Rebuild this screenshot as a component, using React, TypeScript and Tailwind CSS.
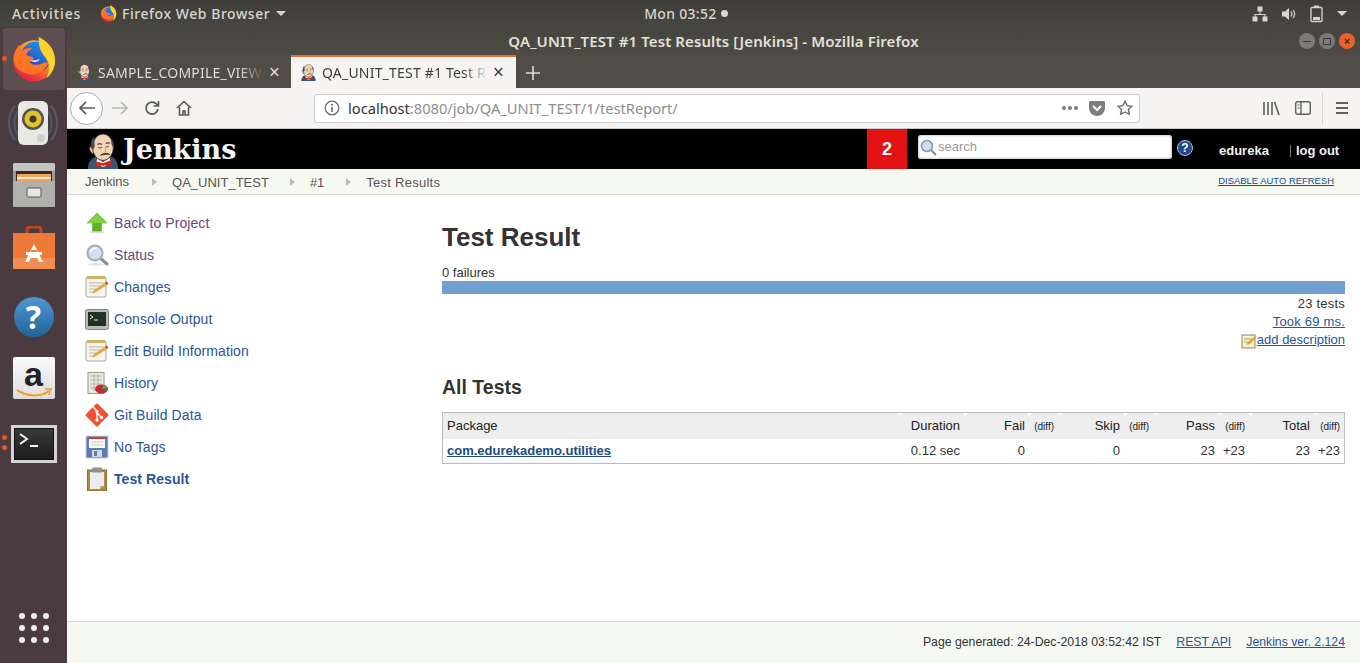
import type { ReactNode } from "react";

const sideItems = [
  { label: "Back to Project", icon: "up", visited: true },
  { label: "Status", icon: "search", visited: true },
  { label: "Changes", icon: "notepad" },
  { label: "Console Output", icon: "terminal" },
  { label: "Edit Build Information", icon: "notepad" },
  { label: "History", icon: "history" },
  { label: "Git Build Data", icon: "git" },
  { label: "No Tags", icon: "save" },
  { label: "Test Result", icon: "clipboard", bold: true },
];

// little white notches on the header row, one per column edge
const notches = [
  "left-[455px]",
  "left-[521px]",
  "left-[585px]",
  "left-[616px]",
  "left-[681px]",
  "left-[711px]",
  "left-[776px]",
  "left-[806px]",
  "left-[871px]",
];

function FirefoxLogo({ size }: { size: number }) {
  return (
    <svg width={size} height={size} viewBox="0 0 48 48">
      <defs>
        <linearGradient id="ffo" x1="0.8" y1="0.1" x2="0.3" y2="1">
          <stop offset="0" stopColor="#ffb52e" />
          <stop offset="0.5" stopColor="#ff7a1f" />
          <stop offset="1" stopColor="#e3164f" />
        </linearGradient>
        <linearGradient id="ffb" x1="0.8" y1="0" x2="0.2" y2="1">
          <stop offset="0" stopColor="#1a9af0" />
          <stop offset="1" stopColor="#3a2fb8" />
        </linearGradient>
      </defs>
      <circle cx="24" cy="26" r="21.500" fill="url(#ffo)" />
      <circle cx="26" cy="22" r="16" fill="url(#ffb)" />
      <path d="M29 1c9 4 17 13 17 24 0 9-4 15-9 19 4-8 3-15 0-20-3-5-9-9-8-23z" fill="#ffd22e" />
      <path d="M3 25c-1-6 2-12 6-16 0 3 0 5 2 7 3-3 7-4 11-3-2 2-5 3-6 6 0 2 4 2 7 3 1 2-1 4-4 5 3 3 8 4 13 2 3-2 5-2 7-1-3 8-11 13-19 12C11 39 4 33 3 25z" fill="#ff7425" />
      <path d="M20 25c3 1 7 0 10-1-1 3-6 5-10 1z" fill="#fff" opacity="0.85" />
    </svg>
  );
}

function Butler({ size }: { size: number }) {
  return (
    <svg width={size} height={size} viewBox="0 0 36 38">
      <path d="M2 38c0-7 3-11 8-13 5-1 15-1 19 1 3 2 5 6 5 12z" fill="#3a5468" />
      <path d="M12 26l6 5 7-5 1 5-7 5h-2l-6-5z" fill="#efefef" />
      <path d="M11 30l7 2 8-3 1 6-8-1-1 2-1-2-7 2z" fill="#d8231f" />
      <path d="M6 14c-2 0-3 2-2 4 1 2 2 4 4 4l1-8z" fill="#e8bd98" stroke="#2a2320" strokeWidth="0.700" />
      <ellipse cx="18" cy="15" rx="11" ry="14" fill="#f1d3b5" stroke="#2a2320" strokeWidth="0.800" />
      <path d="M5 15C5 8 7 5 9 4c-1 4 1 7 0 11l-2 3zM26 5c3 3 4 6 3 11l-2-4z" fill="#4b4b4a" />
      <path d="M12 12c2-1 3-1 5 0M21 11c2-1 3-1 4 0" stroke="#2a2320" strokeWidth="1.100" fill="none" />
      <path d="M13 15c1 1 3 1 4 0M21 14c1 1 2 1 3 0" stroke="#2a2320" strokeWidth="0.900" fill="none" />
      <path d="M20 15c1 3 1 4 0 6" stroke="#b98d70" strokeWidth="0.800" fill="none" />
      <path d="M14 24c3-3 6-3 8-3 2 0 3 1 4 2-3 0-8 0-12 1z" fill="#3c2f28" />
    </svg>
  );
}

function SideIcon({ type }: { type: string }) {
  if (type === "up") {
    return (
      <svg width="24" height="24" viewBox="0 0 24 24">
        <ellipse cx="12" cy="21" rx="8" ry="1.500" fill="#ddd" />
        <path d="M12 2l10 10h-5.500v8h-9v-8H2z" fill="#5fb32a" stroke="#4c9a1f" strokeWidth="0.500" />
        <path d="M12 2l10 10H2z" fill="#86cf45" />
      </svg>
    );
  }
  if (type === "search") {
    return (
      <svg width="24" height="24" viewBox="0 0 24 24">
        <ellipse cx="11" cy="21.500" rx="9" ry="1.500" fill="#e6e6e6" />
        <path d="M15 15l7 6" stroke="#8a8f94" strokeWidth="3" strokeLinecap="round" />
        <circle cx="10" cy="10" r="7.500" fill="#cfe0f2" stroke="#a3adb7" strokeWidth="2" />
        <path d="M5.500 9c1-3 3-4 6-4" stroke="#fff" strokeWidth="1.500" fill="none" />
      </svg>
    );
  }
  if (type === "notepad") {
    return (
      <svg width="24" height="24" viewBox="0 0 24 24">
        <rect x="1" y="2" width="20" height="20" rx="1" fill="#f6f4ec" stroke="#a8a8a0" />
        <rect x="2" y="1" width="18" height="3" fill="#c9b458" />
        <path d="M4 8h15M4 11h12M4 14h8M4 17h6" stroke="#b9b9b0" strokeWidth="1" />
        <path d="M7 19l2-4 11-7 2 2-11 7z" fill="#e3a73c" />
        <path d="M20 8l2 2 1.500-1.500-2-2z" fill="#d8392b" />
      </svg>
    );
  }
  if (type === "terminal") {
    return (
      <svg width="24" height="24" viewBox="0 0 24 24">
        <rect x="0.500" y="2.500" width="23" height="20" rx="2" fill="#b9bbb6" stroke="#80827e" />
        <rect x="3" y="5" width="18" height="14" fill="#1f3322" />
        <path d="M5 8l3 2-3 2" stroke="#e5efe5" strokeWidth="1" fill="none" />
        <path d="M9 13h4" stroke="#e5efe5" strokeWidth="1" />
      </svg>
    );
  }
  if (type === "history") {
    return (
      <svg width="24" height="24" viewBox="0 0 24 24">
        <rect x="3" y="1.500" width="16" height="21" fill="#e9e9e4" stroke="#9a9a94" />
        <path d="M5 5h12M5 9h12M5 13h12M5 17h8M9 3v17M13 3v14" stroke="#b5b5ae" strokeWidth="1" />
        <ellipse cx="16.500" cy="18" rx="6.500" ry="4.500" fill="#c9252f" />
        <path d="M16.500 18l2-4c2 .5 3.500 1.800 4 3.500z" fill="#6a9f3c" />
        <path d="M16.500 18l6 0c0 1-.5 2-1.500 2.500z" fill="#3b6aa8" />
      </svg>
    );
  }
  if (type === "git") {
    return (
      <svg width="24" height="24" viewBox="0 0 24 24">
        <rect x="3.500" y="3.500" width="17" height="17" rx="1.500" transform="rotate(45 12 12)" fill="#f05133" />
        <path d="M8 4l4 4v9M12 10l5 5" stroke="#fff" strokeWidth="1.300" fill="none" />
        <circle cx="12" cy="8.500" r="1.700" fill="#fff" />
        <circle cx="12" cy="17" r="1.700" fill="#fff" />
        <circle cx="16.500" cy="14.500" r="1.700" fill="#fff" />
      </svg>
    );
  }
  if (type === "save") {
    return (
      <svg width="24" height="24" viewBox="0 0 24 24">
        <rect x="1" y="1" width="22" height="22" rx="1" fill="#5b7bb3" stroke="#c8cdd8" />
        <rect x="4" y="2" width="16" height="11" fill="#fafafa" />
        <rect x="4" y="2" width="16" height="2" fill="#d8392b" />
        <path d="M6 7h12M6 10h12" stroke="#ccc" strokeWidth="1" />
        <rect x="7" y="15" width="10" height="7" fill="#d2d6dc" />
        <rect x="9" y="16" width="3" height="5" fill="#5b7bb3" />
      </svg>
    );
  }
  return (
    <svg width="24" height="24" viewBox="0 0 24 24">
      <rect x="2.500" y="3" width="19" height="21" fill="#b5853f" stroke="#96702f" />
      <path d="M5 5h14v14l-4 3H5z" fill="#ececec" />
      <path d="M15 22l4-3h-4z" fill="#a9a9a9" />
      <rect x="7" y="0.500" width="10" height="5" rx="1" fill="#8f8f8f" />
    </svg>
  );
}

function TableHead({ children, right }: { children: ReactNode; right?: boolean }) {
  return <div className={`text-[13px] text-[#222] ${right ? "text-right" : ""}`}>{children}</div>;
}

function Diff() {
  return <div className="text-right text-[10px] text-[#222] pt-px">(diff)</div>;
}

function Crumb({ label }: { label: string }) {
  return <span className="text-[13px] text-[#555]">{label}</span>;
}

function CrumbArrow() {
  return <span className="block w-0 h-0 border-y-[4px] border-y-transparent border-l-[5px] border-l-[#bbb]" />;
}

export default function App() {
  return (
    <div className="w-[1360px] h-[663px] overflow-hidden flex flex-col bg-white font-['Liberation_Sans',sans-serif]">
      {/* gnome top bar */}
      <div className="h-[27px] shrink-0 bg-gradient-to-b from-[#3e3d39] to-[#47463f] flex items-center pl-3 pr-[13px] text-[#d8d6d0] font-['Noto_Sans',sans-serif] text-[14px] font-medium tracking-[0.55px]">
        <span className="w-[68px] tracking-[0.9px]">Activities</span>
        <span className="ml-[20px]"><FirefoxLogo size={17} /></span>
        <span className="ml-[5px]">Firefox Web Browser</span>
        <span className="ml-[6px] w-0 h-0 border-x-[5px] border-x-transparent border-t-[5px] border-t-[#d8d6d0]" />
        <span className="ml-[358px] tracking-[0.3px]">Mon 03:52</span>
        <span className="ml-[4px] w-[7px] h-[7px] rounded-full bg-[#d8d6d0]" />
        <div className="ml-auto flex items-center gap-[13px]">
          <svg width="16" height="16" viewBox="0 0 16 16" fill="#d8d6d0">
            <rect x="5.500" y="0.500" width="5" height="5" />
            <rect x="0.500" y="10.500" width="5" height="5" />
            <rect x="10.500" y="10.500" width="5" height="5" />
            <path d="M7.500 5h1v3h5v3h-1V9H3.500v2h-1V8h5z" />
          </svg>
          <svg width="16" height="16" viewBox="0 0 16 16" fill="none">
            <path d="M1 5.500h3L8 2v12l-4-3.500H1z" fill="#d8d6d0" />
            <path d="M10 5.500c1 1.500 1 3.500 0 5M12 4c2 2.500 2 5.500 0 8" stroke="#d8d6d0" strokeWidth="1.200" />
          </svg>
          <svg width="14" height="18" viewBox="0 0 14 18" fill="none">
            <rect x="1" y="2.500" width="11" height="14" rx="1" stroke="#d8d6d0" strokeWidth="1.300" />
            <rect x="4" y="0.500" width="5" height="2" fill="#d8d6d0" />
            <rect x="3" y="12" width="7" height="3" fill="#d8d6d0" />
          </svg>
          <span className="w-0 h-0 border-x-[5px] border-x-transparent border-t-[5px] border-t-[#d8d6d0]" />
        </div>
      </div>

      <div className="flex-1 flex min-h-0">
        {/* launcher */}
        <aside className="w-[67px] shrink-0 bg-[#4a3b40] flex flex-col items-center relative">
          <span className="absolute left-[2px] top-[29px] w-[5px] h-[5px] rounded-full bg-[#e9561f]" />
          <div className="mt-px w-[62px] h-[62px] ml-px rounded-[4px] bg-[#5e4e52] flex items-center justify-center">
            <FirefoxLogo size={46} />
          </div>
          <div className="mt-[8px] h-[50px] flex items-center justify-center -ml-px">
            <svg width="50" height="50" viewBox="0 0 50 50" fill="none">
              <path d="M7 8C-1 17-1 33 7 42M43 8c8 9 8 25 0 34" stroke="#5a7086" strokeWidth="2" opacity="0.6" />
              <path d="M11 12C5 19 5 31 11 38M39 12c6 7 6 19 0 26" stroke="#5a7086" strokeWidth="2" opacity="0.5" />
              <rect x="10" y="3" width="30" height="44" rx="6" fill="#e8e8e4" />
              <circle cx="25" cy="21" r="11" fill="#55554e" />
              <circle cx="25" cy="21" r="8.500" fill="#e1c42c" />
              <circle cx="25" cy="21" r="3.500" fill="#3a3a30" />
              <circle cx="33" cy="40" r="4" fill="#cfcfca" />
            </svg>
          </div>
          <div className="mt-[15px] h-[44px] w-[42px]">
            <svg width="42" height="44" viewBox="0 0 42 44">
              <rect x="0" y="0" width="42" height="44" rx="2" fill="#9b9b98" />
              <rect x="0" y="0" width="42" height="8" rx="2" fill="#c4c4c1" />
              <rect x="3" y="8" width="36" height="10" fill="#2e2a28" />
              <rect x="4" y="11" width="34" height="7" fill="#f3a657" />
              <rect x="4" y="14" width="34" height="2" fill="#f8e6cf" />
              <rect x="0" y="18" width="42" height="26" fill="#b0b0ad" />
              <rect x="14" y="25" width="14" height="9" rx="1" fill="#e6e6e3" stroke="#555" />
            </svg>
          </div>
          <div className="mt-[19px] h-[44px] w-[42px]">
            <svg width="42" height="44" viewBox="0 0 42 44">
              <path d="M14 8V4c0-2 1-3 3-3h8c2 0 3 1 3 3v4" stroke="#b84a1e" strokeWidth="3" fill="none" />
              <rect x="0" y="7" width="42" height="36" fill="#ee7a38" />
              <rect x="0" y="32" width="42" height="11" fill="#f18d52" />
              <path d="M21 18l-9 18h4l1.500-4h7l1.500 4h4z" fill="#fff" />
              <rect x="13" y="26" width="16" height="3" fill="#fff" />
              <rect x="18" y="24" width="6" height="2" fill="#ee7a38" />
            </svg>
          </div>
          <div className="mt-[27px] w-[40px] h-[40px] rounded-full bg-gradient-to-b from-[#5098d2] to-[#1f639b] flex items-center justify-center text-white text-[32px] font-bold font-['Noto_Sans',sans-serif] leading-none">?</div>
          <div className="mt-[20px] w-[42px] h-[42px] rounded-[2px] bg-gradient-to-b from-[#fbfbfb] to-[#dcdcdc] flex flex-col items-center justify-center relative">
            <span className="text-[#222] text-[34px] leading-[30px] font-bold font-['Liberation_Sans',sans-serif]">a</span>
            <svg width="36" height="10" viewBox="0 0 36 10" className="-mt-px">
              <path d="M1 2c10 7 24 7 32 1" stroke="#f39a1e" strokeWidth="2" fill="none" />
              <path d="M29 1l6 0-2 6" stroke="#f39a1e" strokeWidth="1.500" fill="none" />
            </svg>
          </div>
          <span className="absolute left-[2px] top-[408px] w-[5px] h-[5px] rounded-full bg-[#e9561f]" />
          <span className="absolute left-[2px] top-[418px] w-[5px] h-[5px] rounded-full bg-[#e9561f]" />
          <div className="mt-[26px] w-[46px] h-[38px] border-[3px] border-[#d4d4d0] bg-gradient-to-b from-[#3a3a3a] to-[#1c1c1c] shadow-[inset_0_0_0_1px_#111] relative">
            <svg width="30" height="24" viewBox="0 0 30 24" className="absolute left-[3px] top-[2px]">
              <path d="M3 4l7 5-7 5" stroke="#f2f2f2" strokeWidth="2" fill="none" />
              <path d="M13 16h8" stroke="#f2f2f2" strokeWidth="2" />
            </svg>
          </div>
          <div className="mt-auto mb-[20px] grid grid-cols-3 gap-x-[6px] gap-y-[6px]">
            {Array.from({ length: 9 }).map((_, i) => (
              <span key={i} className="w-[6px] h-[6px] rounded-full bg-[#f0eeee]" />
            ))}
          </div>
        </aside>

        <div className="flex-1 flex flex-col min-w-0">
          {/* firefox chrome */}
          <div className="h-[28px] shrink-0 bg-gradient-to-b from-[#45443e] to-[#4d4b44] flex items-center relative">
            <span className="w-full text-center text-[15px] font-['Noto_Sans',sans-serif] font-semibold tracking-[0.1px] text-[#e2e0da]">QA_UNIT_TEST #1 Test Results [Jenkins] - Mozilla Firefox</span>
            <div className="absolute right-[5px] top-[6px] flex gap-[4px]">
              <span className="w-4 h-4 rounded-full bg-[#7b7a74] flex items-center justify-center"><span className="w-2 h-px bg-[#3c3b37]" /></span>
              <span className="w-4 h-4 rounded-full bg-[#7b7a74] flex items-center justify-center"><span className="w-2 h-[7px] border border-[#3c3b37]" /></span>
              <span className="w-4 h-4 rounded-full bg-[#e9622c] flex items-center justify-center text-[#3c2b20] text-[11px] font-bold leading-none">×</span>
            </div>
          </div>
          <div className="h-[33px] shrink-0 bg-[#4f4d46] flex items-end font-['Noto_Sans',sans-serif] text-[14px] tracking-[0.2px]">
            <div className="w-[224px] h-[31px] flex items-center pl-[9px] text-[#dedcd6]">
              <Butler size={17} />
              <span className="ml-[5px] w-[166px] overflow-hidden whitespace-nowrap [mask-image:linear-gradient(to_right,black_85%,transparent)]">SAMPLE_COMPILE_VIEW</span>
              <span className="ml-[5px] text-[19px] leading-none text-[#dedcd6]">×</span>
            </div>
            <div className="w-[225px] h-[33px] bg-[#f5f4f2] border-t-[2px] border-[#e96c3c] flex items-center pl-[9px] text-[#3d3d3a]">
              <Butler size={17} />
              <span className="ml-[5px] w-[166px] overflow-hidden whitespace-nowrap [mask-image:linear-gradient(to_right,black_85%,transparent)]">QA_UNIT_TEST #1 Test R</span>
              <span className="ml-[5px] text-[19px] leading-none">×</span>
            </div>
            <span className="ml-[10px] h-[31px] flex items-center text-[#dedcd6]">
              <svg width="14" height="14" viewBox="0 0 14 14"><path d="M7 0v14M0 7h14" stroke="#dedcd6" strokeWidth="1.600" /></svg>
            </span>
          </div>
          <div className="h-[41px] shrink-0 bg-[#f5f4f2] border-b border-[#c8c8c6] flex items-center pl-[3px] pr-[12px] relative">
            <div className="w-[33px] h-[33px] rounded-full border border-[#a9a9a8] bg-white flex items-center justify-center">
              <svg width="18" height="16" viewBox="0 0 18 16" fill="none"><path d="M17 8H2M8 2L2 8l6 6" stroke="#5a5a58" strokeWidth="1.700" /></svg>
            </div>
            <svg width="18" height="16" viewBox="0 0 18 16" fill="none" className="ml-[8px]"><path d="M1 8h15M10 2l6 6-6 6" stroke="#b4b4b2" strokeWidth="1.700" /></svg>
            <svg width="16" height="16" viewBox="0 0 16 16" fill="none" className="ml-[15px]"><path d="M14 9a6 6 0 1 1-1.700-5.200L14 5.500M14.500 1v5h-5" stroke="#5a5a58" strokeWidth="1.700" /></svg>
            <svg width="16" height="16" viewBox="0 0 16 16" fill="none" className="ml-[16px]"><path d="M1 8l7-6.500L15 8M3.500 7v8h3.500v-4h2v4h3.500V7" stroke="#5a5a58" strokeWidth="1.600" /></svg>
            <div className="ml-[122px] w-[826px] h-[29px] bg-white border border-[#ccc] rounded-[3px] flex items-center pl-[9px] pr-[6px] font-['Noto_Sans',sans-serif] text-[14.650px]">
              <svg width="16" height="16" viewBox="0 0 16 16" fill="none" className="shrink-0"><circle cx="8" cy="8" r="6.800" stroke="#6a6a68" strokeWidth="1.300" /><path d="M8 7v5" stroke="#6a6a68" strokeWidth="1.600" /><circle cx="8" cy="4.700" r="1" fill="#6a6a68" /></svg>
              <span className="ml-[8px] pt-px text-[#333]">localhost</span>
              <span className="pt-px text-[#8e8e8c]">:8080/job/QA_UNIT_TEST/1/testReport/</span>
              <span className="ml-auto flex gap-[2px] mr-[11px]">
                <span className="w-[4px] h-[4px] rounded-full bg-[#7d7d7b]" /><span className="w-[4px] h-[4px] rounded-full bg-[#7d7d7b]" /><span className="w-[4px] h-[4px] rounded-full bg-[#7d7d7b]" />
              </span>
              <svg width="16" height="15" viewBox="0 0 16 15" className="mr-[12px]"><path d="M1.500 0h13A1.500 1.500 0 0 1 16 1.500V7a8 8 0 0 1-16 0V1.500A1.500 1.500 0 0 1 1.500 0z" fill="#7d7d7b" /><path d="M4 5l4 4 4-4" stroke="#fff" strokeWidth="2" fill="none" /></svg>
              <svg width="16" height="16" viewBox="0 0 16 16" fill="none"><path d="M8 1.200l2.100 4.400 4.800.6-3.500 3.300.9 4.800L8 12l-4.300 2.300.9-4.800L1.100 6.200l4.800-.6z" stroke="#6a6a68" strokeWidth="1.400" /></svg>
            </div>
            <svg width="17" height="15" viewBox="0 0 17 15" fill="none" className="ml-[123px]"><path d="M1 1v13M5 1v13M9 1v13M11.500 1l4.500 13" stroke="#5f5f5d" strokeWidth="1.600" /></svg>
            <svg width="16" height="14" viewBox="0 0 16 14" fill="none" className="ml-[15px]"><rect x="0.700" y="0.700" width="14.600" height="12.600" rx="2" stroke="#5f5f5d" strokeWidth="1.400" /><path d="M6 1v12" stroke="#5f5f5d" strokeWidth="1.400" /><path d="M2.500 4h2M2.500 7h2" stroke="#5f5f5d" /></svg>
            <span className="ml-[11px] w-px h-[33px] bg-[#d6d6d4]" />
            <span className="ml-[13px] w-[12px] flex flex-col gap-[3.500px]">
              <span className="h-[1.500px] bg-[#5f5f5d]" /><span className="h-[1.500px] bg-[#5f5f5d]" /><span className="h-[1.500px] bg-[#5f5f5d]" />
            </span>
          </div>

          {/* jenkins header */}
          <header className="h-[40px] shrink-0 bg-black flex items-center">
            <div className="w-[800px] h-full flex items-center pl-[18px]">
              <div className="self-end"><Butler size={36} /></div>
              <span className="ml-[2px] font-['DejaVu_Serif',serif] font-bold text-[27px] text-[#f4f4f0] leading-none">Jenkins</span>
            </div>
            <div className="w-[40px] h-full bg-[#e31313] flex items-center justify-center text-white text-[18px] font-bold">2</div>
            <div className="ml-[11px] -mt-[4px] w-[254px] h-[24px] rounded-[3px] bg-white shadow-[inset_0_0_3px_#999] flex items-center pl-[2px]">
              <svg width="17" height="17" viewBox="0 0 17 17" fill="none"><path d="M11 11l5 5" stroke="#7d8a99" strokeWidth="2" /><circle cx="7" cy="7" r="5.500" fill="#cfe0f2" stroke="#7d9ab8" strokeWidth="1.500" /></svg>
              <span className="ml-px text-[13px] text-[#999]">search</span>
            </div>
            <div className="ml-[5px] -mt-[2px] w-[16px] h-[16px] rounded-full bg-[#204a87] border border-[#a9c0dd] flex items-center justify-center text-white text-[12px] font-bold leading-none">?</div>
            <span className="ml-[26px] mt-[3px] text-[13px] font-bold text-[#f0f0f0]">edureka</span>
            <span className="ml-[21px] mt-[3px] w-px h-[12px] bg-[#777]" />
            <span className="ml-[5px] mt-[3px] text-[13px] font-bold text-[#f0f0f0]">log out</span>
          </header>

          {/* breadcrumbs */}
          <div className="h-[26px] shrink-0 bg-[#f6f8f2] border-b border-[#d3d7cf] flex items-center pl-[18px] pr-[26px]">
            <Crumb label="Jenkins" />
            <span className="ml-[23px]"><CrumbArrow /></span>
            <span className="ml-[15px]"><Crumb label="QA_UNIT_TEST" /></span>
            <span className="ml-[21px]"><CrumbArrow /></span>
            <span className="ml-[15px]"><Crumb label="#1" /></span>
            <span className="ml-[22px]"><CrumbArrow /></span>
            <span className="ml-[15px] tracking-[0.25px]"><Crumb label="Test Results" /></span>
            <a className="ml-auto text-[9.450px] text-[#204a87] underline">DISABLE AUTO REFRESH</a>
          </div>

          <div className="flex-1 flex min-h-0">
            <nav className="w-[375px] shrink-0 pl-[18px] pt-[12px] flex flex-col">
              {sideItems.map((item) => (
                <div key={item.label} className="h-[32px] flex items-center">
                  <span className="w-[24px] flex justify-center"><SideIcon type={item.icon} /></span>
                  <span className={`ml-[5px] text-[14px] tracking-[0.08px] ${item.bold ? "font-bold" : ""} ${item.visited ? "text-[#6b4678]" : "text-[#2a5596]"}`}>{item.label}</span>
                </div>
              ))}
            </nav>
            <main className="w-[903px] shrink-0 pt-[25px] text-[13px] text-[#333]">
              <h1 className="text-[26px] font-bold leading-[34px] text-[#333]">Test Result</h1>
              <div className="mt-[11px] leading-[15px]">0 failures</div>
              <div className="mt-[1px] h-[13px] bg-[#729fcf]" />
              <div className="mt-[1px] text-right leading-[18px] tracking-[0.2px]">23 tests</div>
              <div className="text-right leading-[18px] tracking-[0.2px] text-[#2a5596] underline">Took 69 ms.</div>
              <div className="-mt-px flex justify-end items-center leading-[18px] text-[#2a5596] underline">
                <svg width="16" height="16" viewBox="0 0 16 16" className="mt-[3px]">
                  <rect x="1" y="2" width="13" height="13" fill="#f6f1c8" stroke="#8a8a60" />
                  <path d="M3 6h8M3 9h6" stroke="#a8a87a" />
                  <path d="M5 12l2-3 7-6 2 1-7 7z" fill="#e3a73c" />
                </svg>
                <span>add description</span>
              </div>
              <h2 className="mt-[26px] text-[19.500px] font-bold leading-[24px] text-[#333]">All Tests</h2>
              <div className="mt-[13px] border border-[#bbb] relative">
                {notches.map((pos) => (
                  <span key={pos} className={`absolute top-0 ${pos} w-[3px] h-[2px] bg-white`} />
                ))}
                <div className="h-[26px] bg-[#eee] grid grid-cols-[433px_80px_65px_29px_66px_29px_66px_30px_65px_30px] items-center px-[4px]">
                  <TableHead>Package</TableHead>
                  <TableHead right>Duration</TableHead>
                  <TableHead right>Fail</TableHead>
                  <Diff />
                  <TableHead right>Skip</TableHead>
                  <Diff />
                  <TableHead right>Pass</TableHead>
                  <Diff />
                  <TableHead right>Total</TableHead>
                  <Diff />
                </div>
                <div className="h-[24px] grid grid-cols-[433px_80px_65px_29px_66px_29px_66px_30px_65px_30px] items-center px-[4px] text-[13px] text-[#333]">
                  <a className="font-bold text-[#204a87] underline whitespace-nowrap">com.edurekademo.utilities</a>
                  <div className="text-right">0.12 sec</div>
                  <div className="text-right">0</div>
                  <div />
                  <div className="text-right">0</div>
                  <div />
                  <div className="text-right">23</div>
                  <div className="text-right">+23</div>
                  <div className="text-right">23</div>
                  <div className="text-right">+23</div>
                </div>
              </div>
            </main>
          </div>

          {/* footer */}
          <footer className="h-[42px] shrink-0 bg-[#f6f8f2] border-t border-[#d3d7cf] flex items-center justify-end pr-[15px] text-[12.250px] text-[#333]">
            <span>Page generated: 24-Dec-2018 03:52:42 IST</span>
            <a className="ml-[15px] text-[#2a5596] underline">REST API</a>
            <a className="ml-[15px] text-[#2a5596] underline">Jenkins ver. 2.124</a>
          </footer>
        </div>
      </div>
    </div>
  );
}
